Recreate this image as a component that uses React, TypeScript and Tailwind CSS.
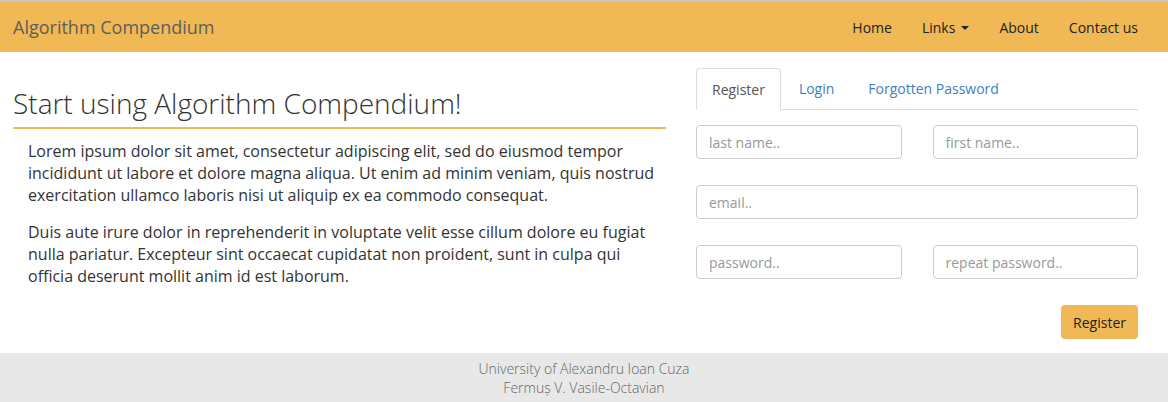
const navLinks = ['Home', 'Links', 'About', 'Contact us'];

function Navbar() {
  return (
    <nav className="h-[52px] border-t-2 border-[#c8c8c8] bg-[#f0b955] flex items-center justify-between pl-[13px] pr-[15px]">
      <span className="text-[18px] text-[#5d5d5d]">Algorithm Compendium</span>
      <ul className="flex items-center h-full">
        {navLinks.map((link) => (
          <li key={link} className="px-[15px] text-[14px] text-[#222] flex items-center">
            {link}
            {link === 'Links' && (
              <span className="ml-[6px] mt-[1px] w-0 h-0 border-x-[4px] border-x-transparent border-t-[4px] border-t-[#222]" />
            )}
          </li>
        ))}
      </ul>
    </nav>
  );
}

function Field({ placeholder }: { placeholder: string }) {
  return (
    <input
      placeholder={placeholder}
      className="h-[34px] w-full rounded-[4px] border border-[#ccc] px-[12px] text-[14px] placeholder:text-[#999] outline-none"
    />
  );
}

function RegisterForm() {
  return (
    <div className="w-[442px] ml-[30px] pt-[16px]">
      {/* Tabs */}
      <div className="flex border-b border-[#ddd] h-[42px]">
        <div className="px-[15px] flex items-center border border-[#ddd] border-b-white rounded-t-[4px] -mb-px bg-white text-[14px] text-[#555]">
          Register
        </div>
        <div className="px-[18px] flex items-center text-[14px] text-[#3d7fc1]">Login</div>
        <div className="px-[16px] flex items-center text-[14px] text-[#3d7fc1]">Forgotten Password</div>
      </div>

      <div className="mt-[15px] flex flex-col gap-[26px]">
        <div className="grid grid-cols-2 gap-[31px]">
          <Field placeholder="last name.." />
          <Field placeholder="first name.." />
        </div>
        <Field placeholder="email.." />
        <div className="grid grid-cols-2 gap-[31px]">
          <Field placeholder="password.." />
          <Field placeholder="repeat password.." />
        </div>
      </div>

      <div className="flex justify-end mt-[26px]">
        <button className="h-[34px] px-[12px] rounded-[4px] bg-[#f0b955] text-[14px] text-[#222]">Register</button>
      </div>
    </div>
  );
}

export default function App() {
  return (
    <div className="w-[1168px] h-[402px] bg-white flex flex-col font-['Open_Sans',sans-serif] overflow-hidden">
      <Navbar />

      <main className="flex h-[301px]">
        <section className="w-[653px] ml-[13px] pt-[36px]">
          <h2 className="text-[28px] font-light text-[#333] leading-[1.1] pb-[8px] border-b-2 border-[#f0b955]">
            Start using Algorithm Compendium!
          </h2>
          <div className="pl-[15px] pt-[11px] text-[16px] leading-[22px] text-[#333]">
            <p>
              Lorem ipsum dolor sit amet, consectetur adipiscing elit, sed do eiusmod tempor incididunt ut labore et
              dolore magna aliqua. Ut enim ad minim veniam, quis nostrud exercitation ullamco laboris nisi ut aliquip ex
              ea commodo consequat.
            </p>
            <p className="mt-[15px]">
              Duis aute irure dolor in reprehenderit in voluptate velit esse cillum dolore eu fugiat nulla pariatur.
              Excepteur sint occaecat cupidatat non proident, sunt in culpa qui officia deserunt mollit anim id est
              laborum.
            </p>
          </div>
        </section>

        <RegisterForm />
      </main>

      <footer className="flex-1 bg-[#e8e8e8] flex flex-col items-center pt-[6px] text-[14px] leading-[19px] font-light text-[#666]">
        <span>University of Alexandru Ioan Cuza</span>
        <span>Fermuș V. Vasile-Octavian</span>
      </footer>
    </div>
  );
}
